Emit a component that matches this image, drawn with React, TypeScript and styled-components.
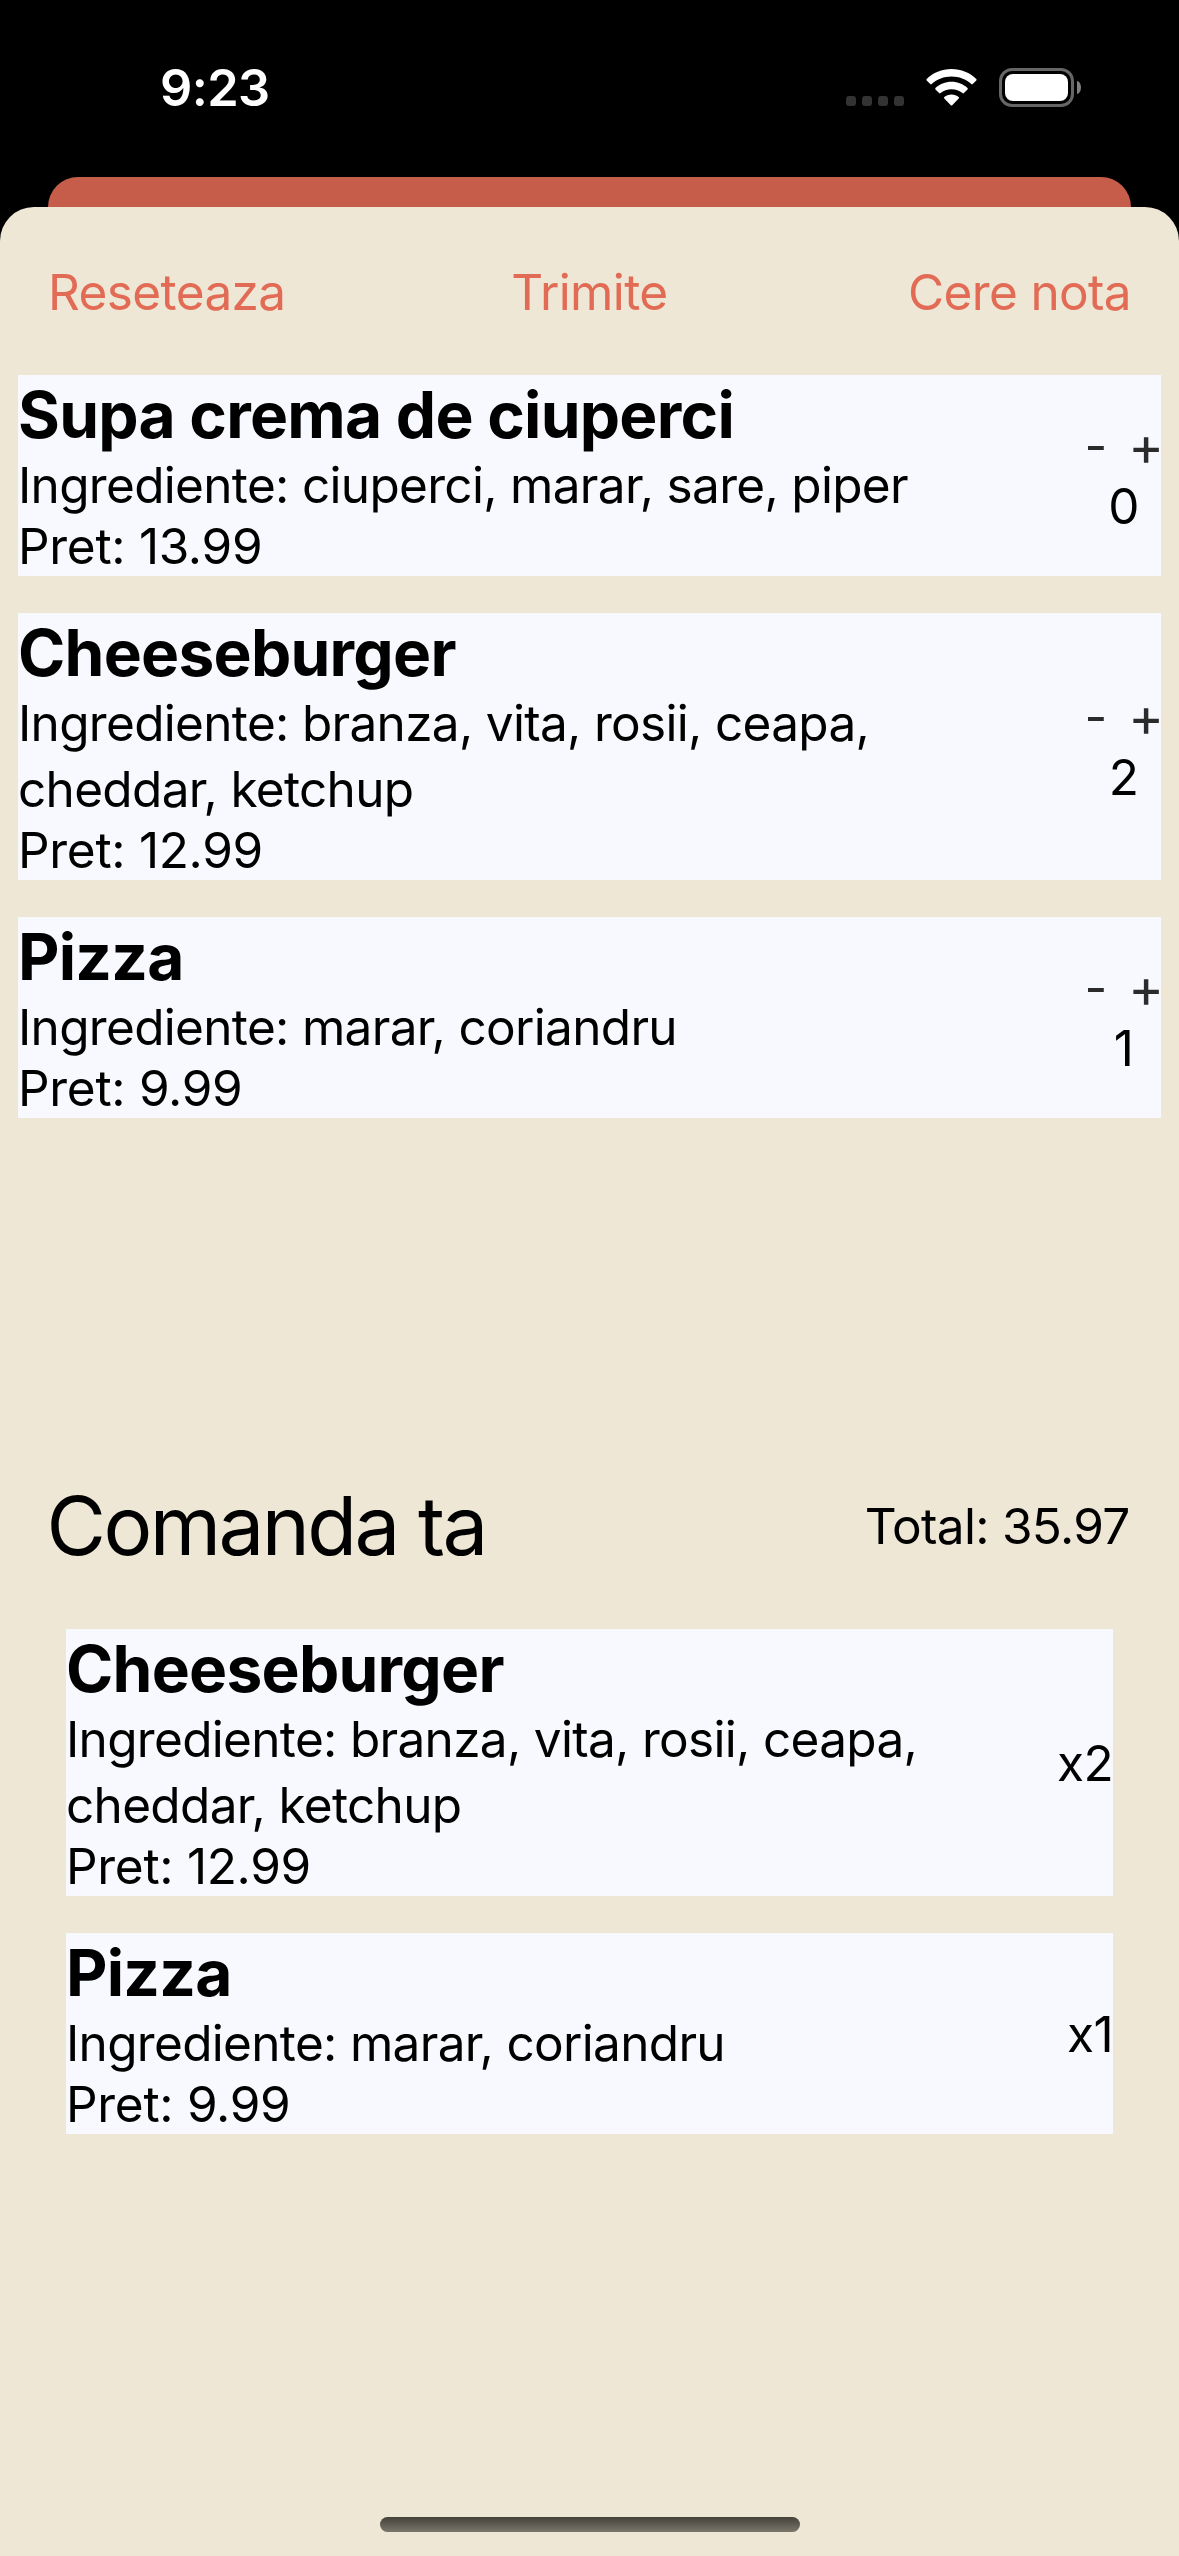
import React from "react";
import styled, { createGlobalStyle } from "styled-components";

const GlobalStyle = createGlobalStyle`
  * { box-sizing: border-box; }
  html, body { margin: 0; padding: 0; background: #000; }
  body { font-family: Inter, "Liberation Sans", sans-serif; color: #000; overflow: hidden; }
`;

const Screen = styled.main`
  width: 1179px;
  height: 2556px;
  display: flex;
  flex-direction: column;
  background: #000;
  overflow: hidden;
`;

const StatusBar = styled.header`
  height: 177px;
  flex: none;
  display: flex;
  align-items: flex-start;
  justify-content: space-between;
  padding: 68px 98px 0 160px;
`;

const Clock = styled.time`
  color: #fff;
  font-size: 50.5px;
  font-weight: 600;
  line-height: 40px;
  letter-spacing: -0.6px;
`;

const StatusIcons = styled.div`
  display: flex;
  align-items: flex-start;
  height: 39px;
`;

const SignalDots = styled.div`
  display: flex;
  gap: 6px;
  margin: 28px 22px 0 0;
`;

const Dot = styled.span`
  width: 10px;
  height: 10px;
  border-radius: 3px;
  background: #333;
`;

const WifiIcon = styled.svg`
  display: block;
  width: 51px;
  height: 37px;
  margin: 1px 22px 0 0;
`;

const Battery = styled.div`
  display: flex;
  align-items: center;
  gap: 3px;
`;

const BatteryCase = styled.div`
  width: 75px;
  height: 39px;
  padding: 3px;
  border: 3px solid #666;
  border-radius: 13px;
`;

const BatteryFill = styled.div`
  height: 100%;
  border-radius: 8px;
  background: #fff;
`;

const BatteryTip = styled.span`
  width: 4px;
  height: 13px;
  border-radius: 0 4px 4px 0 / 0 6.5px 6.5px 0;
  background: #808080;
`;

const BackCard = styled.div`
  flex: none;
  height: 30px;
  margin: 0 48px;
  background: #c65d4a;
  border-radius: 30px 30px 0 0;
`;

const Sheet = styled.section`
  flex: 1;
  display: flex;
  flex-direction: column;
  align-items: stretch;
  background: #eee7d5;
  border-radius: 34px 34px 0 0;
`;

const Toolbar = styled.nav`
  height: 168px;
  flex: none;
  display: grid;
  grid-template-columns: 1fr auto 1fr;
  align-items: start;
  padding: 55px 48px 0;
`;

const Action = styled.button<{ $tracking: number; $side: "start" | "center" | "end" }>`
  justify-self: ${(p) => p.$side};
  height: 61px;
  border: 0;
  padding: 0;
  background: none;
  color: #e26b55;
  font: inherit;
  font-size: 49.5px;
  line-height: 61px;
  letter-spacing: ${(p) => p.$tracking}px;
`;

const List = styled.div<{ $inset: number; $height?: number }>`
  display: flex;
  flex-direction: column;
  gap: 37px;
  padding: 0 ${(p) => p.$inset}px;
  height: ${(p) => (p.$height ? `${p.$height}px` : "auto")};
`;

const Dish = styled.article`
  display: flex;
  align-items: center;
  justify-content: space-between;
  background: #f8f9fe;
`;

const DishText = styled.div`
  flex: none;
  width: 950px;
`;

const DishName = styled.h2`
  margin: 0;
  height: 77px;
  font-size: 64px;
  font-weight: 700;
  line-height: 80px;
  letter-spacing: -0.75px;
`;

const Ingredients = styled.p`
  margin: 0;
  font-size: 49.5px;
  line-height: 66px;
  letter-spacing: -0.68px;
`;

const Price = styled.p`
  margin: 0;
  height: 58px;
  font-size: 49.5px;
  line-height: 56px;
  letter-spacing: -0.3px;
`;

const Stepper = styled.div`
  display: flex;
  flex-direction: column;
  align-items: center;
  margin-right: -3px;
`;

const StepButtons = styled.div`
  display: flex;
  gap: 21px;
`;

const StepButton = styled.button<{ $size: number }>`
  border: 0;
  padding: 0;
  background: none;
  color: #2b2b2b;
  font: inherit;
  font-size: ${(p) => p.$size}px;
  line-height: 61px;
`;

const Count = styled.span`
  padding-right: 1px;
  font-size: 49.5px;
  line-height: 61px;
`;

const Quantity = styled.span`
  padding-top: 1px;
  font-size: 49.5px;
  line-height: 61px;
  letter-spacing: -0.6px;
`;

const OrderHeader = styled.div`
  display: flex;
  align-items: center;
  justify-content: space-between;
  height: 202px;
  padding: 0 49.5px 4px 46.5px;
`;

const OrderTitle = styled.h1`
  margin: 0;
  font-size: 81.5px;
  font-weight: 400;
  line-height: 100px;
  letter-spacing: -2.6px;
`;

const Total = styled.span`
  font-size: 49.5px;
  line-height: 61px;
  letter-spacing: -0.7px;
`;

const HomeIndicator = styled.div`
  width: 420px;
  height: 15px;
  margin: auto auto 24px;
  border-radius: 8px;
  background: linear-gradient(#444239, #7a766b);
`;

type DishData = { name: string; ingredients: string; price: string; count: number };

const menu: DishData[] = [
  { name: "Supa crema de ciuperci", ingredients: "ciuperci, marar, sare, piper", price: "13.99", count: 0 },
  { name: "Cheeseburger", ingredients: "branza, vita, rosii, ceapa, cheddar, ketchup", price: "12.99", count: 2 },
  { name: "Pizza", ingredients: "marar, coriandru", price: "9.99", count: 1 },
];

function DishRow({ dish, children }: { dish: DishData; children: React.ReactNode }) {
  return (
    <Dish>
      <DishText>
        <DishName>{dish.name}</DishName>
        <Ingredients>Ingrediente: {dish.ingredients}</Ingredients>
        <Price>Pret: {dish.price}</Price>
      </DishText>
      {children}
    </Dish>
  );
}

export default function App() {
  const order = menu.filter((d) => d.count > 0);
  return (
    <Screen>
      <GlobalStyle />
      <StatusBar>
        <Clock>9:23</Clock>
        <StatusIcons>
          <SignalDots>
            <Dot />
            <Dot />
            <Dot />
            <Dot />
          </SignalDots>
          <WifiIcon viewBox="0 0 51 37" fill="#fff">
            <path d="M25.5 0C35.200 0 44 3.800 50.300 10Q51 10.700 50.300 11.400L46.700 15.100Q46 15.800 45.300 15.100C40 10.300 33 7.600 25.500 7.600S11 10.300 5.700 15.100Q5 15.800 4.300 15.100L0.700 11.400Q0 10.700 0.700 10C7 3.800 15.800 0 25.500 0Z" />
            <path d="M25.500 12.800C31.800 12.800 37.300 15.200 41.500 19Q42.200 19.700 41.500 20.400L37.900 24.100Q37.200 24.800 36.500 24.100C33.500 21.600 29.700 20.300 25.500 20.300S17.500 21.600 14.500 24.100Q13.800 24.800 13.100 24.100L9.500 20.400Q8.800 19.700 9.500 19C13.700 15.200 19.200 12.800 25.500 12.800Z" />
            <path d="M25.500 25.600C28.300 25.600 30.800 26.500 32.700 28.100Q33.400 28.800 32.700 29.500L26.200 36.200Q25.500 36.900 24.800 36.200L18.300 29.500Q17.600 28.800 18.300 28.100C20.200 26.500 22.700 25.600 25.500 25.600Z" />
          </WifiIcon>
          <Battery>
            <BatteryCase>
              <BatteryFill />
            </BatteryCase>
            <BatteryTip />
          </Battery>
        </StatusIcons>
      </StatusBar>
      <BackCard />
      <Sheet>
        <Toolbar>
          <Action $tracking={-0.6} $side="start">Reseteaza</Action>
          <Action $tracking={-0.6} $side="center">Trimite</Action>
          <Action $tracking={-0.65} $side="end">Cere nota</Action>
        </Toolbar>
        <List $inset={18} $height={1052}>
          {menu.map((dish) => (
            <DishRow key={dish.name} dish={dish}>
              <Stepper>
                <StepButtons>
                  <StepButton $size={49.5}>-</StepButton>
                  <StepButton $size={54}>+</StepButton>
                </StepButtons>
                <Count>{dish.count}</Count>
              </Stepper>
            </DishRow>
          ))}
        </List>
        <OrderHeader>
          <OrderTitle>Comanda ta</OrderTitle>
          <Total>Total: 35.97</Total>
        </OrderHeader>
        <List $inset={66}>
          {order.map((dish) => (
            <DishRow key={dish.name} dish={dish}>
              <Quantity>x{dish.count}</Quantity>
            </DishRow>
          ))}
        </List>
        <HomeIndicator />
      </Sheet>
    </Screen>
  );
}
